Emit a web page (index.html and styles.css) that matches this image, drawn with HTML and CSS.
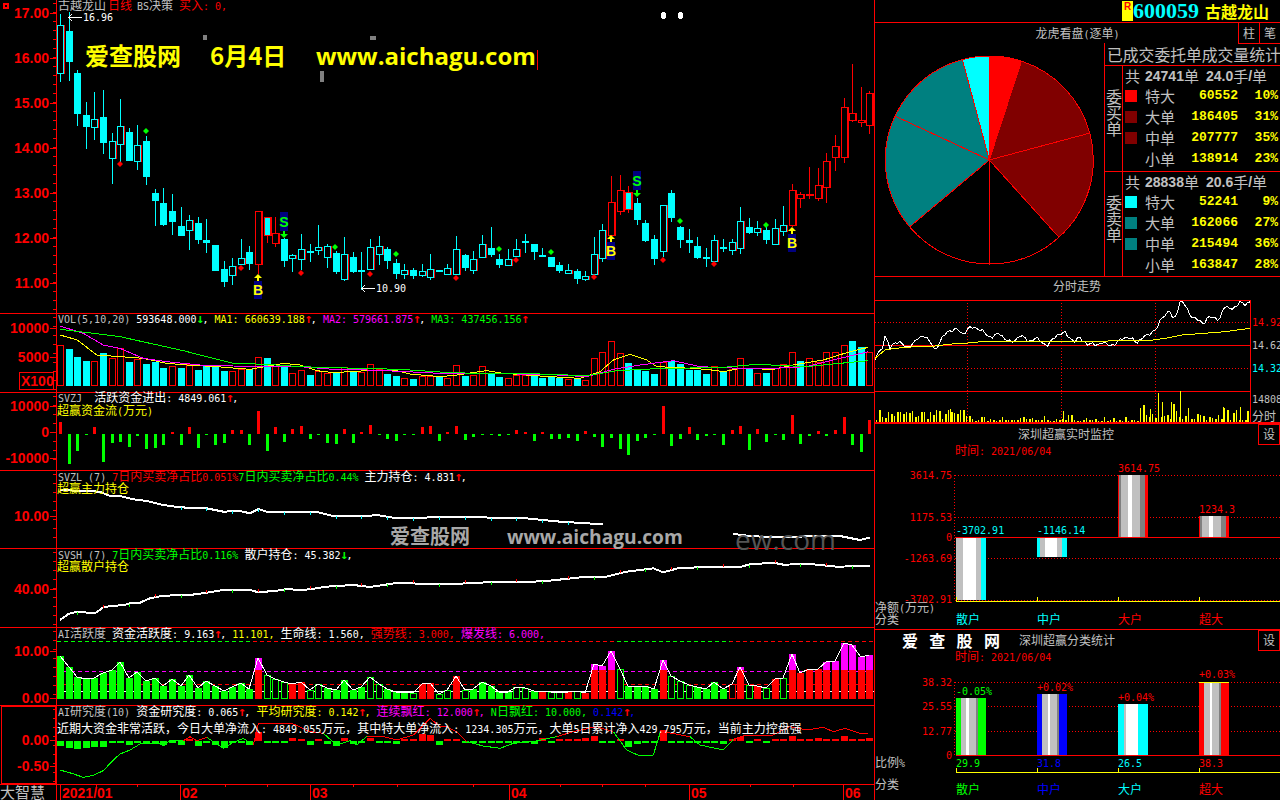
FILE: index.html
```html
<!DOCTYPE html>
<html lang="zh-CN">
<head>
  <meta charset="UTF-8">
  <title>古越龙山 600059 日线</title>
  <link rel="stylesheet" href="styles.css">
</head>
<body>
<div class="screen">

  <div class="left">
    <div class="pane"><svg id="kline" viewBox="0 0 875 314"></svg></div>
    <div class="pane"><svg id="vol" viewBox="0 314 875 79"></svg></div>
    <div class="pane"><svg id="svzj" viewBox="0 393 875 78"></svg></div>
    <div class="pane"><svg id="svzl" viewBox="0 471 875 78"></svg></div>
    <div class="pane"><svg id="svsh" viewBox="0 549 875 79"></svg></div>
    <div class="pane"><svg id="aihy" viewBox="0 628 875 78"></svg></div>
    <div class="pane"><svg id="aiyj" viewBox="0 706 875 79"></svg></div>
    <div class="pane"><svg id="dates" viewBox="0 785 875 15"></svg></div>
  </div>

  <div class="right">
    <header class="quote">
      <span class="r-badge">R</span>
      <span class="code">600059</span>
      <span class="name">古越龙山</span>
    </header>

    <section class="kanpan">
      <div class="kanpan-head">
        <span></span>
        <span class="kanpan-title">龙虎看盘<i>(</i>逐单<i>)</i></span>
        <span class="tabs"><b>柱</b><b>笔</b></span>
      </div>
      <div class="kanpan-body">
        <svg id="pie" viewBox="875 43 229 233"></svg>
        <div class="stats">
          <div class="stats-title">已成交委托单成交量统计</div>
          <div class="group">
            <div class="side">委买单</div>
            <div class="rows">
              <div class="total"><em>共</em><b>24741</b><em>单</em><b class="sp">24.0</b><em>手</em><b>/</b><em>单</em></div>
              <div class="row"><s class="sw red"></s><span>特大</span><b>60552</b><b>10%</b></div>
              <div class="row"><s class="sw dred"></s><span>大单</span><b>186405</b><b>31%</b></div>
              <div class="row"><s class="sw dred"></s><span>中单</span><b>207777</b><b>35%</b></div>
              <div class="row"><s class="sw"></s><span>小单</span><b>138914</b><b>23%</b></div>
            </div>
          </div>
          <div class="group">
            <div class="side">委卖单</div>
            <div class="rows">
              <div class="total"><em>共</em><b>28838</b><em>单</em><b class="sp">20.6</b><em>手</em><b>/</b><em>单</em></div>
              <div class="row"><s class="sw cyan"></s><span>特大</span><b>52241</b><b>9%</b></div>
              <div class="row"><s class="sw teal"></s><span>大单</span><b>162066</b><b>27%</b></div>
              <div class="row"><s class="sw teal"></s><span>中单</span><b>215494</b><b>36%</b></div>
              <div class="row"><s class="sw"></s><span>小单</span><b>163847</b><b>28%</b></div>
            </div>
          </div>
        </div>
      </div>
    </section>

    <section class="panel fenshi"><svg id="fenshi" viewBox="875 277 405 147"></svg></section>
    <section class="panel monitor"><svg id="monitor" viewBox="875 424 405 206"></svg></section>
    <section class="panel"><svg id="classify" viewBox="875 630 405 170"></svg></section>
  </div>

</div>
<script src="chart.js"></script>
</body>
</html>
```

FILE: styles.css
```css
* { box-sizing: border-box; margin: 0; padding: 0; }
html, body { background: #000; overflow: hidden; }
body { width: 1280px; height: 800px; font-family: "Noto Sans CJK SC", sans-serif; color: #c0c0c0; }

.screen { display: grid; grid-template-columns: 875px 405px; height: 800px; }

.left { display: grid; grid-template-rows: 314px 79px 78px 78px 79px 78px 79px 15px; }
.pane, .panel { min-height: 0; }
.pane svg, .panel svg, #pie { display: block; width: 100%; height: 100%; overflow: visible; }

.right { display: grid; grid-template-rows: 23px 254px 147px 206px 170px; }

/* quote bar */
.quote { display: flex; align-items: center; padding-left: 247px; border-bottom: 1px solid #f00; color: #ff0; }
.r-badge { width: 11px; height: 20px; background: #ff0; color: #f00; font: bold 10px/11px "Liberation Sans", sans-serif; text-align: center; }
.code { width: 72px; color: #0ff; font: bold 22px/22px "Liberation Serif", serif; }
.name { font-size: 16px; font-weight: 700; line-height: 22px; }

/* big order pie */
.kanpan { display: grid; grid-template-rows: 20px 1fr; border-bottom: 1px solid #f00; }
.kanpan-head { display: grid; grid-template-columns: 42px 1fr 42px; }
.kanpan-title { text-align: center; font-size: 12px; line-height: 20px; }
.kanpan-title i { font: 10px "DejaVu Sans Mono", monospace; }
.tabs { display: grid; grid-template-columns: 1fr 1fr; }
.tabs b { border-left: 1px solid #f00; border-bottom: 1px solid #f00; text-align: center; font-size: 12px; font-weight: 400; line-height: 20px; }
.kanpan-body { display: grid; grid-template-columns: 229px 1fr; min-height: 0; }
.stats { display: grid; grid-template-rows: 23px 105px 105px; border-left: 1px solid #f00; overflow: hidden; }
.stats-title { padding-left: 2px; font-size: 15.8px; line-height: 23px; white-space: nowrap; border-bottom: 1px solid #f00; }
.group { display: grid; grid-template-columns: 18px 1fr; min-height: 0; }
.group + .group { border-top: 1px solid #f00; }
.side { width: 18px; padding: 22px 1px 0; font-size: 16px; line-height: 16px; border-right: 1px solid #f00; }
.rows { display: grid; grid-template-rows: 19px repeat(4, 21px); padding-left: 2px; }
.total, .row { display: flex; align-items: center; font-size: 15px; line-height: 19px; }
.total em { font-style: normal; font-size: 15px; }
.total em:first-child { width: 20px; }
.total b { font: bold 14px "Liberation Sans", sans-serif; }
.total .sp { margin-left: 7px; }
.row { display: grid; grid-template-columns: 12px 8px 30px 63px 40px; }
.row span { grid-column: 3; }
.row b { color: #ff0; text-align: right; font: bold 13px "Liberation Mono", monospace; }
.sw { width: 12px; height: 12px; }
.sw.red { background: #f00; }
.sw.dred { background: #800000; }
.sw.cyan { background: #0ff; }
.sw.teal { background: #008080; }

/* svg text: CJK at 12px beside half width latin, like the old bitmap font */
svg text { white-space: pre; }
.cjk { font: 12px "Noto Sans CJK SC", sans-serif; }
.la { font: 10px "DejaVu Sans Mono", monospace; }
.ar { font: bold 13px "DejaVu Sans Mono", monospace; letter-spacing: -1.83px; }
.axis { font: bold 14px "Liberation Sans", sans-serif; fill: #f00; }
.brand { font: 15px "Noto Sans CJK SC", sans-serif; fill: #c0c0c0; }
.banner { font: bold 24px "Open Sans", "Noto Sans CJK SC", sans-serif; fill: #ff0; }
.banner-cn { font: bold 24px "Noto Sans CJK SC", sans-serif; fill: #ff0; }
.wm { font: bold 20px "Noto Sans CJK SC", sans-serif; fill: #a8a8a8; }
.wm-en { font: bold 19.2px "Open Sans", sans-serif; fill: #a8a8a8; }
.wm-dim { font: 28px "Open Sans", sans-serif; fill: #555; }
.wm-white { font: bold 16px "Noto Sans CJK SC", sans-serif; fill: #fff; }

.ln { fill: none; stroke-width: 1; }
.crisp, polyline, path { shape-rendering: crispEdges; }

.t-red { fill: #f00; }
.t-gray { fill: #c0c0c0; }
.t-white { fill: #fff; }
.t-yellow { fill: #ff0; }
.t-green { fill: #0f0; }
.t-cyan { fill: #0ff; }
.t-blue { fill: #00f; }
.t-mag { fill: #f0f; }

.f-red { fill: #f00; }
.f-dred { fill: #800000; }
.f-cyan { fill: #0ff; }
.f-teal { fill: #008080; }
.f-green { fill: #0f0; }
.f-blue { fill: #00f; }
.f-mag { fill: #f0f; }
.f-white { fill: #fff; }
.f-yellow { fill: #ff0; }
.f-navy { fill: #000080; }
.f-lg { fill: #c0c0c0; }
.f-dg { fill: #808080; }
.f-black { fill: #000; }

.s-red { stroke: #f00; }
.s-cyan { stroke: #0ff; }
.s-green { stroke: #0f0; }
.s-yellow { stroke: #ff0; }
.s-mag { stroke: #f0f; }
.s-white { stroke: #fff; }
.s-thick { stroke-width: 2; }
.dot { stroke-dasharray: 1 2; }
.dash { stroke-dasharray: 4 3; }
.pie-slice { stroke: #f00; stroke-width: 1; }
```

FILE: chart.js
```js
const NS = "http://www.w3.org/2000/svg";
const STEP = 8.61;
const cx = i => 60 + i * STEP;

function el(p, tag, attrs, cls) {
  const e = document.createElementNS(NS, tag);
  for (const k in attrs) e.setAttribute(k, attrs[k]);
  if (cls) e.setAttribute("class", cls);
  p.appendChild(e);
  return e;
}
const rect = (p, x, y, w, h, cls) => el(p, "rect", { x, y, width: w, height: h }, "crisp " + cls);
const hline = (p, y, x0, x1, cls) => el(p, "line", { x1: x0, x2: x1, y1: y + .5, y2: y + .5 }, "ln crisp " + cls);
const vline = (p, x, y0, y1, cls) => el(p, "line", { x1: x + .5, x2: x + .5, y1: y0, y2: y1 }, "ln crisp " + cls);
const poly = (p, pts, cls) => el(p, "polyline", { points: pts.map(q => q.join(",")).join(" ") }, "ln " + cls);
const hollow = (p, x, y, w, h, cls) => el(p, "rect", { x: x + .5, y: y + .5, width: w - 1, height: Math.max(h - 1, 1) }, "ln crisp " + cls);

// text with mixed runs: [["text", "t-red"], ...]; cjk 12px, ascii 6px wide
function label(p, x, y, runs, anchor) {
  if (typeof runs === "string") runs = [[runs, "t-gray"]];
  const t = el(p, "text", { x, y });
  if (anchor) t.setAttribute("text-anchor", anchor);
  runs.forEach(([str, c]) => {
    str.match(/[↑↓]|[\x00-\x7f]+|[^\x00-\x7f↑↓]+/g).forEach(part => {
      const kind = /[↑↓]/.test(part) ? "ar " : /^[\x00-\x7f]/.test(part) ? "la " : "cjk ";
      el(t, "tspan", {}, kind + c).textContent = part;
    });
  });
  return t;
}
function plain(p, x, y, str, cls, anchor) {
  const t = el(p, "text", { x, y }, cls);
  if (anchor) t.setAttribute("text-anchor", anchor);
  t.textContent = str;
}
// the long thin arrow beside the high and low price
function priceTag(p, x, y, str) {
  hline(p, y, x, x + 14, "s-white");
  poly(p, [[x + 4, y - 3], [x + 1, y + .5], [x + 4, y + 4]], "s-white");
  label(p, x + 15, y + 4, [[str, "t-white"]]);
}

// zoomed crop coords -> screen; second list continues 1320 further right
function zpts(a, b, oy) {
  const out = [];
  for (let i = 0; i < a.length; i += 2) out.push([a[i] / 3, oy + a[i + 1] / 3]);
  for (let i = 0; i < b.length; i += 2) out.push([440 + b[i] / 3, oy + b[i + 1] / 3]);
  return out;
}
function yAt(pts, x) {
  for (let i = 1; i < pts.length; i++) {
    if (x <= pts[i][0]) {
      const [x0, y0] = pts[i - 1], [x1, y1] = pts[i];
      return y0 + (y1 - y0) * (x - x0) / (x1 - x0);
    }
  }
  return pts[pts.length - 1][1];
}

function frame(p, y0, y1, labels) {
  vline(p, 56, y0, y1, "s-red");
  vline(p, 874, y0, y1, "s-red");
  hline(p, y1 - 1, 0, 875, "s-red");
  labels.forEach(([y, s]) => {
    plain(p, 49, y + 5, s, "axis", "end");
    hline(p, Math.round(y), 50, 56, "s-red");
  });
  for (let y = y0 + 3; y < y1 - 3; y += 9) hline(p, y, 53, 56, "s-red");
}

/* ---------- k line ---------- */
const KL = [
[42,75,220,245,"o"],[35,93,185,242,"c"],[210,220,341,378,"c"],[306,346,380,447,"c"],[276,358,380,420,"o"],
[270,352,428,462,"c"],[400,424,473,551,"o"],[297,379,431,485,"o"],[384,396,483,484,"c"],[375,436,482,510,"o"],
[408,424,530,555,"c"],[568,580,602,678,"c"],[564,610,675,678,"c"],[582,634,665,705,"c"],[622,679,707,708,"c"],
[645,661,691,750,"o"],[652,670,719,732,"c"],[658,721,728,758,"c"],[735,735,812,812,"c"],[783,808,845,861,"c"],
[774,799,824,855,"o"],[717,775,793,795,"o"],[739,757,791,810,"c"],[634,634,793,822,"r"],[650,650,706,728,"x"],
[652,698,730,740,"r"],[715,718,782,800,"c"],[763,764,773,815,"o"],[702,748,778,810,"o"],[732,754,758,785,"c"],
[676,742,751,765,"o"],[733,739,770,803,"o"],[752,760,815,822,"c"],[712,763,838,843,"o"],[756,771,815,818,"c"],
[756,811,813,870,"c"],[718,742,806,808,"o"],[708,739,761,795,"o"],[742,748,782,806,"c"],[778,790,821,838,"c"],
[792,811,823,838,"o"],[804,811,827,838,"c"],[792,814,824,832,"o"],[762,808,830,840,"o"],[810,810,815,815,"c"],
[792,805,821,825,"o"],[708,748,821,825,"o"],[762,766,803,812,"c"],[753,778,809,822,"o"],[705,733,770,772,"o"],
[682,745,765,772,"c"],[763,778,795,803,"c"],[748,778,794,795,"o"],[717,748,768,768,"o"],[702,723,728,760,"c"],
[732,733,755,780,"c"],[745,766,769,772,"c"],[770,772,800,802,"c"],[786,796,812,818,"c"],[793,811,818,820,"o"],
[808,814,836,852,"c"],[813,829,838,842,"o"],[712,763,821,822,"o"],[672,691,773,785,"o"],[528,607,704,705,"r"],
[525,571,634,644,"r"],[558,577,628,638,"x"],[595,610,659,674,"c"],[660,670,722,725,"c"],[706,718,776,794,"c"],
[616,616,752,772,"o"],[570,580,653,665,"c"],[678,682,719,743,"c"],[687,721,728,759,"c"],[711,739,773,778,"c"],
[744,772,776,800,"c"],[705,721,782,783,"o"],[717,742,747,755,"c"],[717,727,749,765,"o"],[622,664,743,762,"o"],
[655,682,698,702,"c"],[663,685,695,707,"o"],[668,690,719,732,"c"],[657,685,731,731,"o"],[618,676,692,708,"o"],
[552,571,674,682,"r"],[576,583,593,624,"r"],[501,582,585,597,"r"],[504,556,593,603,"r"],[460,484,562,608,"r"],
[405,439,472,512,"r"],[293,322,470,488,"r"],[192,340,359,365,"r"],[262,360,365,380,"r"],[273,280,374,401,"r"]
];

function drawKline() {
  const p = document.getElementById("kline");
  frame(p, 0, 314, [[13, "17.00"], [58, "16.00"], [103, "15.00"], [148, "14.00"], [193, "13.00"], [238, "12.00"], [283, "11.00"]]);
  rect(p, 3, 3, 6, 6, "f-red");
  rect(p, 5, 5, 2, 2, "f-black");

  KL.forEach((k, i) => {
    const x = Math.round(cx(i)), t = k[4];
    const s = t === "r" || t === "x" ? "s-red" : "s-cyan";
    const top = Math.round(k[1] / 3), bot = Math.round(k[2] / 3);
    vline(p, x, k[0] / 3, k[3] / 3, s);
    if (t === "c") {
      rect(p, x - 3, top, 7, Math.max(bot - top, 2), "f-cyan");
    } else {
      vline(p, x + 4, top, bot + 1, "s-red");
      hollow(p, x - 3, top, 7, bot - top + 1, (t === "x" ? "f-cyan " : "f-black ") + s);
    }
  });

  // signal diamonds
  const diamond = (x, y, c) => el(p, "polygon", { points: `${x},${y - 3} ${x + 3},${y} ${x},${y + 3} ${x - 3},${y}` }, c);
  [[146, 131], [335, 247], [396, 254], [499, 249], [551, 252], [680, 221], [766, 225]].forEach(([x, y]) => diamond(x, y, "f-green"));
  [[120, 164], [241, 268], [301, 273], [370, 274], [456, 278], [516, 260], [594, 277], [663, 260], [714, 264]].forEach(([x, y]) => diamond(x, y, "f-red"));

  const signal = (x, y, w, letter, c, ay, dn) => {
    rect(p, x - 4, y, 8, w, "f-navy");
    plain(p, x, y + w - 4, letter, "axis " + c.replace("f-", "t-"), "middle");
    const a = dn ? `${x - 4},${ay} ${x - 1},${ay} ${x - 1},${ay - 3} ${x + 1},${ay - 3} ${x + 1},${ay} ${x + 4},${ay} ${x},${ay + 4}`
                 : `${x - 4},${ay} ${x},${ay - 4} ${x + 4},${ay} ${x + 1},${ay} ${x + 1},${ay + 3} ${x - 1},${ay + 3} ${x - 1},${ay}`;
    el(p, "polygon", { points: a }, c);
  };
  signal(258, 281, 18, "B", "f-yellow", 278, false);
  signal(284, 212, 19, "S", "f-green", 234, true);
  signal(611, 242, 18, "B", "f-yellow", 239, false);
  signal(637, 171, 19, "S", "f-green", 193, true);
  signal(792, 234, 18, "B", "f-yellow", 231, false);

  label(p, 58, 10, [["古越龙山", "t-gray"]]);
  label(p, 108, 10, [["日线", "t-red"]]);
  label(p, 137, 10, [["BS决策", "t-gray"]]);
  label(p, 179, 10, [["买入: 0,", "t-red"]]);
  priceTag(p, 68, 17, "16.96");
  priceTag(p, 361, 288, "10.90");

  plain(p, 85, 65, "爱查股网", "banner-cn");
  plain(p, 210, 65, "6月4日", "banner-cn");
  plain(p, 316, 65, "www.aichagu.com", "banner");
  vline(p, 537, 50, 70, "s-red");

  rect(p, 203, 35, 4, 5, "f-dg");
  rect(p, 370, 36, 6, 4, "f-dg");
  rect(p, 320, 71, 4, 11, "f-dg");
  rect(p, 661, 13, 5, 5, "f-white");
  rect(p, 678, 13, 5, 5, "f-white");
  rect(p, 662, 12, 3, 7, "f-white");
  rect(p, 679, 12, 3, 7, "f-white");
}

/* ---------- volume ---------- */
const VOL = "r106 c117 c141 c153 r154 c129 r145 r115 c156 r148 c162 c156 c174 r167 c173 r162 c179 c168 c168 c182 r183 r176 c178 r142 c144 r168 c170 r190 r181 c195 r182 r188 c188 r172 c184 r186 r163 r178 c192 c198 r205 c207 r197 r197 c202 r203 r166 c197 r196 r169 c188 c201 r205 r194 r194 c197 c203 c201 c203 r207 c205 r211 r145 r127 r94 r130 c159 c177 c183 c192 r155 c152 c162 c180 c180 c192 r169 c185 r178 r145 c173 r190 c190 r175 r163 r125 c154 r145 r155 r127 r127 r106 c93 c112 r125".split(" ");

function drawVol() {
  const p = document.getElementById("vol");
  frame(p, 314, 393, [[328, "10000"], [357, "5000"]]);
  const base = 386;
  VOL.forEach((v, i) => {
    const x = Math.round(cx(i)), top = Math.round(310 + +v.slice(1) / 3);
    if (v[0] === "c") rect(p, x - 3, top, 7, base - top, "f-cyan");
    else hollow(p, x - 3, top, 7, base - top, "s-red");
  });
  poly(p, zpts([180,75,232,90,290,135,360,140,430,145,500,160,560,165,650,170,750,178,850,160,900,165,950,182,1000,188,1100,182,1180,180,1230,192,1320,200],
    [50,195,140,182,190,190,300,198,420,205,450,195,480,185,520,150,570,133,620,150,650,170,700,172,800,178,850,185,900,175,1000,178,1060,165,1150,150,1230,125,1285,112], 310), "s-yellow");
  poly(p, zpts([180,48,250,70,310,105,360,115,430,145,500,155,600,165,700,168,800,170,900,170,1000,178,1100,180,1200,184,1320,190],
    [50,190,150,190,350,195,440,200,520,178,600,165,700,152,780,170,900,175,1000,175,1100,170,1200,145,1285,125], 310), "s-mag");
  poly(p, zpts([180,58,280,70,360,80,450,100,550,122,600,135,700,160,800,163,900,170,1000,173,1200,178,1320,186],
    [100,190,300,192,440,197,530,182,650,176,850,172,950,163,1100,170,1200,160,1285,152], 310), "s-green");

  label(p, 58, 323, [["VOL(5,10,20) ", "t-gray"], ["593648.000", "t-white"], ["↓", "t-green"], [", ", "t-white"],
    ["MA1: 660639.188", "t-yellow"], ["↑", "t-red"], [", ", "t-white"], ["MA2: 579661.875", "t-mag"], ["↑", "t-red"], [", ", "t-white"],
    ["MA3: 437456.156", "t-green"], ["↑", "t-red"]]);
  hollow(p, 19, 372, 35, 18, "s-red");
  plain(p, 21, 386, "X100", "axis");
}

/* ---------- svzj ---------- */
const SVZJ = [336,461,423,374,351,455,397,394,411,378,417,413,405,366,405,351,414,372,405,399,360,360,405,303,423,351,396,357,348,387,372,399,402,357,399,366,345,375,387,393,375,375,351,348,393,
  365,348,390,381,375,372,378,372,360,366,393,366,387,387,384,393,363,381,411,384,417,435,393,384,375,288,408,387,351,390,378,375,405,360,348,420,357,396,375,390,315,402,378,363,378,360,321,405,426,330];

function drawSvzj() {
  const p = document.getElementById("svzj");
  frame(p, 393, 471, [[406, "10000"], [432, "0"], [458, "-10000"]]);
  const zero = 371;
  SVZJ.forEach((v, i) => {
    const x = Math.round(cx(i)) - 1;
    const a = Math.min(v, zero) / 3 + 310, b = Math.max(v, zero) / 3 + 310;
    rect(p, x, Math.round(a), 3, Math.max(Math.round(b - a), 1), v < zero ? "f-red" : "f-green");
  });
  label(p, 58, 402, [["SVZJ  ", "t-gray"], ["活跃资金进出: 4849.061", "t-white"], ["↑", "t-red"], [",", "t-white"]]);
  label(p, 57, 415, [["超赢资金流(万元)", "t-yellow"]]);
}

/* ---------- holdings ---------- */
function drawHold() {
  let p = document.getElementById("svzl");
  frame(p, 471, 549, [[516, "10.00"]]);
  const a = zpts([180,540,300,545,330,558,360,558,400,568,440,573,490,585,540,592,620,595,670,605,720,603,750,610,775,597,800,605,880,607,950,606,1000,618,1100,618,1130,615,1190,625,1260,624,1320,620],
    [100,621,180,624,260,625,360,635,490,643], 310);
  const b = zpts([], [880,672,930,678,1000,682,1050,680,1200,678,1260,690,1290,683], 310);
  poly(p, a, "s-white s-thick");
  poly(p, b, "s-white s-thick");
  for (let i = 14; i < 62; i += 3) vline(p, Math.round(cx(i)), yAt(a, cx(i)), yAt(a, cx(i)) + 3, "s-cyan");
  label(p, 58, 481, [["SVZL (7) ", "t-gray"], ["7日内买卖净占比0.051%", "t-red"], ["7日内买卖净占比0.44%", "t-green"], [" ", "t-white"],
    ["主力持仓: 4.831", "t-white"], ["↑", "t-red"], [",", "t-white"]]);
  label(p, 57, 493, [["超赢主力持仓", "t-yellow"]]);
  plain(p, 735, 550, "ew.com", "wm-dim");
  plain(p, 390, 544, "爱查股网", "wm");
  plain(p, 507, 544, "www.aichagu.com", "wm-en");

  p = document.getElementById("svsh");
  frame(p, 549, 628, [[589, "40.00"]]);
  const c = zpts([180,930,205,912,230,905,285,910,310,892,340,887,370,886,390,880,420,878,450,865,490,857,570,855,620,848,670,840,750,840,775,847,830,842,860,837,900,840,930,838,980,830,1060,825,1110,831,1190,819,1260,821,1320,822],
    [50,822,100,818,280,815,330,812,430,801,490,802,560,785,640,775,670,787,720,773,900,771,930,763,1000,758,1030,764,1110,762,1190,770,1290,768], 310);
  poly(p, c, "s-white s-thick");
  for (let i = 2; i < 95; i += 3) {
    const y = yAt(c, cx(i));
    if (i % 2) vline(p, Math.round(cx(i)), y - 3, y, "s-red");
    else vline(p, Math.round(cx(i)), y, y + 3, "s-green");
  }
  label(p, 58, 559, [["SVSH (7) ", "t-gray"], ["7日内买卖净占比0.116%", "t-green"], [" ", "t-white"],
    ["散户持仓: 45.382", "t-white"], ["↓", "t-green"], [",", "t-white"]]);
  label(p, 57, 571, [["超赢散户持仓", "t-yellow"]]);
}

/* ---------- AI panes ---------- */
const HY = "g108 g141 g171 g176 g173 g159 g150 g126 g173 g156 g183 g174 g197 g177 g197 g165 g204 g183 g198 g213 g201 g189 g207 R114 o165 o177 o186 r192 r186 o210 o192 g204 g210 g180 g210 g201 o171 o192 g207 g216 g216 o219 r193 r189 o222 o210 r168 o210 g207 g186 g198 g216 g216 o202 o205 g213 r213 o215 o216 r216 o214 r219 R132 R138 R93 o148 g198 g202 g198 g207 R120 o168 o183 o195 g201 g207 g186 g207 h193 R141 o195 r198 o205 r177 o175 R102 r160 r148 r148 R126 R123 R69 R75 R111 R105".split(" ");
const YJ = [-16,-22,-24,-20,-18,-18,-7,-6,-12,-4,-6,-8,-12,-6,-12,2,-14,-4,-12,-20,-4,-4,-12,28,-4,-4,-4,9,6,-12,3,-10,-14,8,-10,-4,10,-5,-5,-8,4,3,20,17,-12,
  4,6,-7,-4,-4,-4,-6,-3,-3,-3,-10,8,-3,4,3,4,10,16,-3,-3,3,-18,-9,-7,-3,33,-7,-7,-5,-4,-4,-6,-10,4,13,-7,3,-5,3,3,14,5,5,10,4,5,15,4,4,10];

function drawAi() {
  let p = document.getElementById("aihy");
  frame(p, 628, 706, [[651, "10.00"], [698, "0.00"]]);
  const base = 699;
  const py = z => 620 + z / 3;
  hline(p, Math.round(py(62)), 57, 874, "s-red dash");
  hline(p, Math.round(py(62)), 57, 250, "s-green dash");
  hline(p, Math.round(py(62)), 440 + 530 / 3, 440 + 870 / 3, "s-green dash");
  hline(p, Math.round(py(152)), 57, 874, "s-mag dash");
  hline(p, Math.round(py(193)), 57, 874, "s-red dash");
  hline(p, Math.round(py(214)), 57, 874, "s-white");

  const tops = [];
  HY.forEach((v, i) => {
    const x = Math.round(cx(i)), t = v[0], top = Math.round(py(+v.slice(1)));
    tops.push([Math.round(cx(i)), top]);
    if (t === "g") rect(p, x - 3, top, 7, base - top, "f-green");
    else if (t === "r") rect(p, x - 3, top, 7, base - top, "f-red");
    else if (t === "o") hollow(p, x - 3, top, 7, base - top, "f-black s-green");
    else if (t === "h") hollow(p, x - 3, top, 7, base - top, "f-black s-red");
    else {
      rect(p, x - 3, top, 7, base - top, "f-red");
      rect(p, x - 3, top, 7, Math.round(py(150)) - top, "f-mag");
    }
  });
  poly(p, tops, "s-white");
  label(p, 58, 638, [["AI活跃度 ", "t-gray"], ["资金活跃度: 9.163", "t-white"], ["↑", "t-red"], [", ", "t-white"], ["11.101,", "t-yellow"],
    [" 生命线: 1.560, ", "t-white"], ["强势线: 3.000, ", "t-red"], ["爆发线: 6.000,", "t-mag"]]);

  p = document.getElementById("aiyj");
  frame(p, 706, 785, [[740, "0.00"], [766, "-0.50"]]);
  hollow(p, 1, 706, 55, 78, "s-red");
  YJ.forEach((v, i) => {
    const x = Math.round(cx(i)) - 3, h = Math.max(Math.abs(v) / 3, 2);
    const y0 = 740;
    if (v > 0) rect(p, x, Math.round(y0 - h) + 1, 7, Math.round(h), "f-red");
    else rect(p, x, y0 + 1, 7, Math.round(h), "f-green");
  });
  const ln = zpts([180,450,215,460,250,472,280,466,310,452,340,420,360,402,390,390,420,372,480,370,490,378,510,362,550,362,570,350,590,362,620,352,650,372,670,385,700,367,730,355,760,375,775,310,840,310,880,312,930,335,970,340,1010,375,1050,362,1070,375,1100,350,1150,350,1190,360,1240,345,1290,295,1320,320],
    [20,320,50,335,80,365,130,378,180,385,220,370,280,365,350,350,400,335,470,320,520,335,560,390,600,408,640,405,660,340,670,335,750,350,780,375,850,390,880,358,920,345,1000,345,1050,320,1100,330,1150,322,1180,335,1215,325,1260,340,1285,340], 620);
  for (let i = 1; i < ln.length; i++) {
    const mid = (ln[i - 1][1] + ln[i][1]) / 2;
    poly(p, [ln[i - 1], ln[i]], mid > 739 ? "s-green" : "s-red");
  }
  label(p, 58, 716, [["AI研究度(10) ", "t-gray"], ["资金研究度: 0.065", "t-white"], ["↑", "t-red"], [", ", "t-white"],
    ["平均研究度: 0.142", "t-yellow"], ["↑", "t-red"], [", ", "t-yellow"], ["连续飘红: 12.000", "t-mag"], ["↑", "t-red"], [", ", "t-mag"],
    ["N日飘红: 10.000, ", "t-green"], ["0.142", "t-blue"], ["↑", "t-red"], [",", "t-blue"]]);
  label(p, 57, 733, [["近期大资金非常活跃，今日大单净流入: 4849.055万元，其中特大单净流入: 1234.305万元，大单5日累计净入429.795万元，当前主力控盘强", "t-white"]]);

  p = document.getElementById("dates");
  vline(p, 56, 785, 800, "s-red");
  vline(p, 874, 785, 800, "s-red");
  plain(p, 0, 798, "大智慧", "brand");
  [[60, "2021/01"], [180, "02"], [310, "03"], [509, "04"], [689, "05"], [843, "06"]].forEach(([x, s]) => {
    vline(p, x, 785, 800, "s-red");
    plain(p, x + 2, 798, s, "axis");
  });
  [96, 137, 225, 267, 353, 397, 473, 560, 602, 645, 750, 793].forEach(x => vline(p, x, 785, 787, "s-red"));
}

/* ---------- right side ---------- */
function drawPie() {
  const p = document.getElementById("pie");
  const c = [989.3, 160], r = 104;
  const at = d => [c[0] + r * Math.sin(d * Math.PI / 180), c[1] - r * Math.cos(d * Math.PI / 180)];
  [[0, 18, "f-red"], [18, 75, "f-dred"], [75, 138, "f-dred"], [138, 180, "f-black"],
   [180, 230, "f-black"], [230, 295, "f-teal"], [295, 345, "f-teal"], [345, 360, "f-cyan"]].forEach(([a, b, cls]) => {
    const s = at(a), e = at(b);
    el(p, "path", { d: `M${c[0]} ${c[1]}L${s[0]} ${s[1]}A${r} ${r} 0 0 1 ${e[0]} ${e[1]}Z` }, "pie-slice " + cls);
  });
}

function drawFenshi() {
  const p = document.getElementById("fenshi");
  const fx = z => 875 + z / 3, fy = z => 275 + z / 3;
  label(p, 1077, 291, "分时走势", "middle");
  const right = 1250;
  hline(p, 300, 875, right, "s-red");
  hline(p, 322, 875, right, "s-red dot");
  hline(p, 345, 875, right, "s-red");
  hline(p, 368, 875, right, "s-red dot");
  hline(p, 391, 875, right, "s-red");
  hline(p, 422, 875, 1280, "s-red s-thick");
  [967, 1061, 1155].forEach(x => vline(p, x, 300, 422, "s-red dot"));
  vline(p, right, 300, 422, "s-red");

  // volume bars: a noisy floor plus the real spikes
  let seed = 7;
  const rnd = () => (seed = (seed * 16807) % 2147483647) / 2147483647;
  for (let x = 876; x < right; x += 3) {
    const h = x < 970 ? 2 + rnd() * 11 : x < 1140 ? rnd() * rnd() * 7 + 1 : 2 + rnd() * rnd() * 16;
    rect(p, x, Math.round(422 - h), 1 + (x % 2), Math.round(h), "f-yellow");
  }
  [[850, 88], [860, 60], [888, 60], [915, 92], [565, 33], [1045, 45], [225, 40], [1095, 45], [825, 38], [1115, 34]].forEach(([z, h]) => vline(p, Math.round(fx(z)), 422 - h / 3, 422, "s-yellow"));

  const raw = [0,255,8,235,20,230,30,178,45,220,70,195,95,222,110,205,150,180,180,225,200,190,225,165,245,162,260,178,280,160,310,158,340,185,375,178,410,205,435,180,460,200,480,190,520,212,545,178,570,175,600,200,615,188,640,210,680,205,720,210,745,185,790,200,830,170,845,165,860,125,885,110,895,138,917,78,925,85,955,130,985,143,1000,128,1040,130,1045,95,1085,100,1095,78,1105,85,1125,86];
  const base = [];
  for (let i = 0; i < raw.length; i += 2) base.push([fx(raw[i]), fy(raw[i + 1])]);
  const pts = [];
  for (let x = 875, i = 0; x <= right; x += 2.5, i++) pts.push([x, yAt(base, x) + Math.sin(i * 2.3) * 1.2 + Math.sin(i * 5.1) * 1.2]);
  const av = [0,250,30,225,60,220,120,215,180,213,230,207,280,204,340,198,500,198,700,198,820,197,870,190,920,180,1000,174,1050,170,1125,160];
  const avg = [];
  for (let i = 0; i < av.length; i += 2) avg.push([fx(av[i]), fy(av[i + 1])]);
  poly(p, pts, "s-white");
  poly(p, avg, "s-yellow");

  label(p, 1252, 326, [["14.92", "t-red"]]);
  label(p, 1252, 349, [["14.62", "t-gray"]]);
  label(p, 1252, 372, [["14.32", "t-cyan"]]);
  label(p, 1252, 403, [["14808", "t-gray"]]);
  label(p, 1252, 421, [["分时", "t-gray"]]);
}

function stripes(p, y0, y1, list) {
  list.forEach(([a, b, cls]) => rect(p, Math.round(875 + a / 3), y0, Math.round(875 + b / 3) - Math.round(875 + a / 3), y1 - y0, cls));
}
function settingBtn(p, y) {
  hollow(p, 1258, y, 22, 21, "s-red");
  label(p, 1263, y + 15, "设");
}
function axisText(p, y, s) {
  label(p, 952, y + 4, [[s, "t-red"]], "end");
}

function drawMonitor() {
  const p = document.getElementById("monitor");
  label(p, 1066, 439, "深圳超赢实时监控", "middle");
  settingBtn(p, 424);
  label(p, 955, 455, [["时间: 2021/06/04", "t-red"]]);
  [475, 517, 558, 600].forEach(y => hline(p, y, 955, 1280, "s-red dot"));
  vline(p, 954, 475, 600, "s-red dot");
  [[475, "3614.75"], [517, "1175.53"], [537, "0"], [558, "-1263.69"], [599, "-3702.91"]].forEach(([y, s]) => axisText(p, y, s));

  const mk = (o, e) => [[o, o + 7, "f-dg"], [o + 7, o + 28, "f-lg"], [o + 28, o + 42, "f-white"], [o + 42, o + 65, "f-lg"], [o + 65, o + 80, "f-dg"], [o + 80, o + 89, e]];
  stripes(p, 475, 537, mk(730, "f-red"));
  stripes(p, 516, 537, mk(973, "f-red"));
  vline(p, Math.round(875 + 730 / 3), 475, 537, "s-red");
  vline(p, Math.round(875 + 973 / 3), 516, 537, "s-red");
  hline(p, 537, 955, 1280, "s-red");
  stripes(p, 538, 600, [[243, 252, "f-lg"], [252, 265, "f-lg"], [265, 303, "f-white"], [303, 318, "f-lg"], [318, 333, "f-cyan"]]);
  stripes(p, 538, 557, [[486, 495, "f-cyan"], [495, 510, "f-lg"], [510, 546, "f-white"], [546, 561, "f-lg"], [561, 576, "f-cyan"]]);

  label(p, 1118, 472, [["3614.75", "t-red"]]);
  label(p, 1199, 513, [["1234.3", "t-red"]]);
  label(p, 956, 534, [["-3702.91", "t-cyan"]]);
  label(p, 1037, 534, [["-1146.14", "t-cyan"]]);

  hline(p, 601, 956, 1280, "s-yellow");
  [956, 1037, 1118, 1199].forEach(x => vline(p, x, 597, 601, "s-yellow"));
  label(p, 875, 612, "净额(万元)");
  label(p, 875, 624, "分类");
  [[956, "散户", "t-cyan"], [1037, "中户", "t-cyan"], [1118, "大户", "t-red"], [1199, "超大", "t-red"]].forEach(([x, s, c]) => label(p, x, 624, [[s, c]]));
  hline(p, 629, 875, 1280, "s-red");
}

function drawClassify() {
  const p = document.getElementById("classify");
  "爱查股网".split("").forEach((ch, i) => plain(p, 902 + i * 27.3, 647, ch, "wm-white"));
  label(p, 1019, 645, "深圳超赢分类统计");
  settingBtn(p, 630);
  label(p, 955, 661, [["时间: 2021/06/04", "t-red"]]);
  [682, 706, 731].forEach(y => hline(p, y, 955, 1280, "s-red dot"));
  vline(p, 954, 682, 755, "s-red dot");
  [[682, "38.32"], [706, "25.55"], [731, "12.77"], [755, "0"]].forEach(([y, s]) => axisText(p, y, s));

  stripes(p, 698, 755, [[243, 259, "f-green"], [259, 274, "f-lg"], [274, 281, "f-white"], [281, 304, "f-lg"], [304, 309, "f-dg"], [309, 333, "f-green"]]);
  stripes(p, 694, 755, [[486, 501, "f-blue"], [501, 519, "f-lg"], [519, 525, "f-white"], [525, 546, "f-lg"], [546, 551, "f-dg"], [551, 576, "f-blue"]]);
  stripes(p, 704, 755, [[729, 747, "f-cyan"], [747, 752, "f-lg"], [752, 790, "f-white"], [790, 819, "f-cyan"]]);
  stripes(p, 682, 755, [[972, 988, "f-red"], [988, 1005, "f-lg"], [1005, 1011, "f-white"], [1011, 1033, "f-lg"], [1033, 1038, "f-dg"], [1038, 1062, "f-red"]]);
  hline(p, 682, 1199, 1229, "s-yellow");
  hline(p, 755, 956, 1280, "s-red");

  label(p, 956, 695, [["-0.05%", "t-green"]]);
  label(p, 1037, 691, [["+0.02%", "t-red"]]);
  label(p, 1118, 701, [["+0.04%", "t-red"]]);
  label(p, 1199, 678, [["+0.03%", "t-red"]]);

  label(p, 875, 767, "比例%");
  [[956, "29.9", "t-green"], [1037, "31.8", "t-blue"], [1118, "26.5", "t-cyan"], [1199, "38.3", "t-red"]].forEach(([x, s, c]) => label(p, x, 767, [[s, c]]));
  hline(p, 772, 956, 1280, "s-yellow");
  [956, 1037, 1118, 1199].forEach(x => vline(p, x, 768, 772, "s-yellow"));
  label(p, 875, 789, "分类");
  [[956, "散户", "t-green"], [1037, "中户", "t-blue"], [1118, "大户", "t-cyan"], [1199, "超大", "t-red"]].forEach(([x, s, c]) => label(p, x, 794, [[s, c]]));
}

drawKline();
drawVol();
drawSvzj();
drawHold();
drawAi();
drawPie();
drawFenshi();
drawMonitor();
drawClassify();
```
